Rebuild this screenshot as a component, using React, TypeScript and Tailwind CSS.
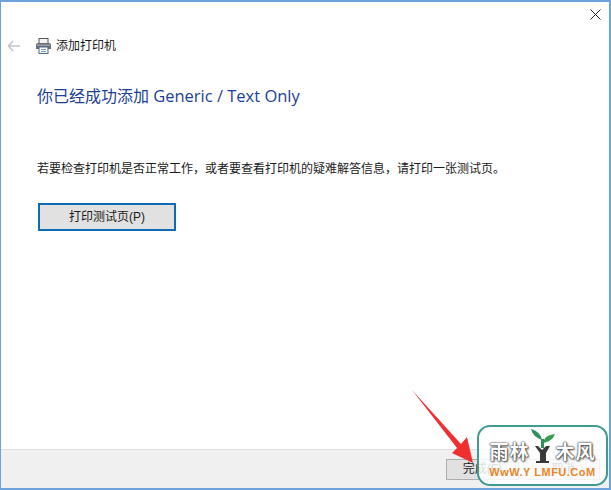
import React from "react";

const cjk = "font-['Liberation_Sans','Noto_Sans_CJK_SC',sans-serif]";
const logoText = "text-[19px] leading-[22px] font-bold text-white tracking-[1px] [text-shadow:0_0_1px_#333,0_0_2px_#333,1px_1px_2px_#555]";

const PrinterIcon = () => (
    <svg width="17" height="16" viewBox="0 0 17 16">
        <rect x="4" y="0.5" width="9" height="5" fill="#f4f4f4" stroke="#555" />
        <path d="M1 6.5 Q1 5 3 5 H14 Q16 5 16 6.5 V11 H1 Z" fill="#6b6f74" />
        <rect x="2" y="6.5" width="13" height="1.5" fill="#9a9ea3" />
        <rect x="4" y="9" width="9" height="6.5" fill="#f8f8f8" stroke="#4a6d8c" />
        <path d="M6 11.5 H11 M6 13.5 H11" stroke="#7d9ab5" strokeWidth="1" />
    </svg>
);

const Watermark = () => (
    <div className="absolute left-[476px] top-[423px] w-[131px] h-[61px] rounded-[13px] border-2 border-[#3f9a94] bg-white/85 flex flex-col items-center">
        <div className="flex items-end h-[38px] mt-[-1px]">
            <span className={logoText}>雨林</span>
            <svg width="26" height="38" viewBox="0 0 26 38">
                <path d="M12 14 Q11 6 1 3 Q3 11 12 14 Z" fill="#2f8f58" />
                <path d="M13 17 Q14 9 25 8 Q22 16 13 17 Z" fill="#3c9a55" />
                <path d="M11 13 H14 V22 H11 Z" fill="#2f8f58" />
                <path d="M5 20 H8 L12 24 L16 20 H20 L16 27 V35 H19 V37 H6 V35 H10 V27 Z" fill="#3a3a3a" />
            </svg>
            <span className={logoText}>木风</span>
        </div>
        <div className="text-[11px] leading-[13px] font-bold text-[#e8862a] tracking-[0.5px] whitespace-nowrap mt-[2px]">WwW.Y LMFU.CoM</div>
    </div>
);

export default function App() {
    return (
        <div className={`relative w-[611px] h-[490px] overflow-hidden bg-white border-t-2 border-l border-r-2 border-b-2 border-[#6ea2dc] flex flex-col ${cjk}`}>
            {/* Close button */}
            <div className="flex justify-end h-[28px] shrink-0">
                <div className="w-[28px] h-[24px] flex items-center justify-center">
                    <svg width="11" height="11" viewBox="0 0 11 11">
                        <path d="M0.5 0.5 L10.5 10.5 M10.5 0.5 L0.5 10.5" stroke="#222" strokeWidth="1" />
                    </svg>
                </div>
            </div>

            {/* Wizard header */}
            <div className="flex items-center h-[30px] mt-[1px] shrink-0">
                <svg width="13" height="12" viewBox="0 0 13 12" className="ml-[6px]">
                    <path d="M6 1 L1.5 6 L6 11 M1.5 6 H13" fill="none" stroke="#c4c4c4" strokeWidth="1.6" />
                </svg>
                <div className="ml-[15px] mt-[-1px]"><PrinterIcon /></div>
                <span className="ml-[4px] text-[12px] leading-[16px] text-[#1a1a1a]">添加打印机</span>
            </div>

            {/* Content */}
            <div className="pl-[36px] flex flex-col flex-1">
                <h1 className="mt-[23px] text-[16px] leading-[24px] font-normal text-[#1b3f94] whitespace-nowrap font-['Open_Sans','Noto_Sans_CJK_SC',sans-serif]">
                    你已经成功添加 <span className="text-[16.5px]">Generic / Text Only</span>
                </h1>
                <p className="mt-[53px] text-[12px] leading-[16px] text-[#1a1a1a] whitespace-nowrap">
                    若要检查打印机是否正常工作，或者要查看打印机的疑难解答信息，请打印一张测试页。
                </p>
                <button className={`mt-[26px] ml-[1px] w-[138px] h-[28px] bg-[#e1e1e1] border-2 border-[#0f6cb4] text-[12px] text-[#1a1a1a] ${cjk}`}>
                    打印测试页(P)
                </button>
            </div>

            {/* Footer */}
            <div className="h-[39px] shrink-0 bg-[#f0f0f0] border-t border-[#dfdfdf] flex justify-end items-start pt-[9px] pr-[9px] gap-[8px]">
                <button className={`w-[73px] h-[21px] bg-[#e1e1e1] border border-[#adadad] text-[12px] leading-[19px] text-[#1a1a1a] ${cjk}`}>
                    完成(F)
                </button>
                <button className={`w-[73px] h-[21px] bg-[#e1e1e1] border border-[#adadad] text-[12px] leading-[19px] text-[#1a1a1a] ${cjk}`}>
                    取消
                </button>
            </div>

            {/* Red annotation arrow */}
            <svg width="70" height="90" viewBox="0 0 70 90" className="absolute left-[410px] top-[386px]">
                <path d="M1 2 L50 56 L56 49 L62 75 L41 65 L46 60 Z" fill="#f03030" />
            </svg>

            <Watermark />
        </div>
    );
}
